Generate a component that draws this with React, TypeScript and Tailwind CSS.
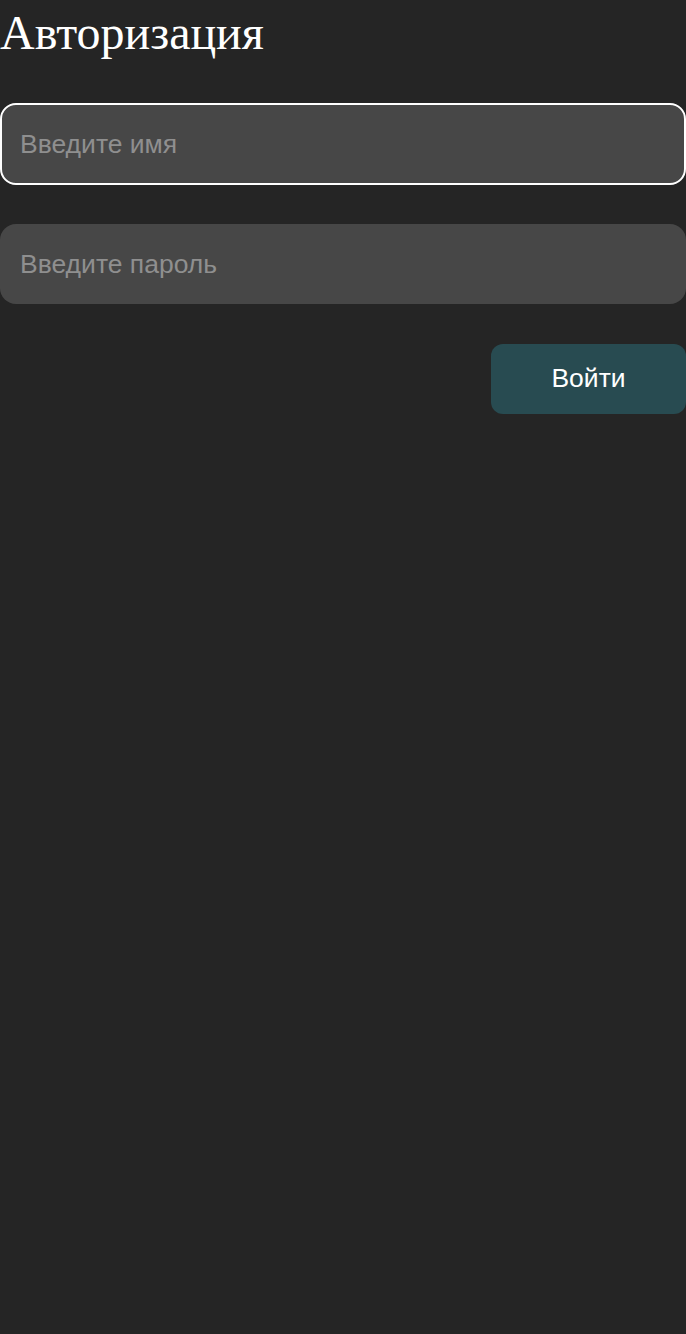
export default function App() {
    return (
        <div className="min-h-[1334px] w-full bg-[#252525]">
            <h1 className="font-['Liberation_Serif',serif] text-[48px] leading-[66px] text-white">
                Авторизация
            </h1>
            <form
                className="flex flex-col mt-[37px]"
                onSubmit={(e) => e.preventDefault()}
            >
                <input
                    className="h-[82px] w-full rounded-[16px] border-2 border-white bg-[#474747] px-[18px] font-['Liberation_Sans',sans-serif] text-[26.5px] text-white placeholder:text-[#8f8f8f] outline-none"
                    type="text"
                    placeholder="Введите имя"
                />
                <input
                    className="mt-[39px] h-[80px] w-full rounded-[16px] bg-[#474747] px-[20px] font-['Liberation_Sans',sans-serif] text-[26.5px] text-white placeholder:text-[#8f8f8f] outline-none"
                    type="password"
                    placeholder="Введите пароль"
                />
                <div className="flex justify-end mt-[40px]">
                    <button
                        className="h-[70px] w-[195px] rounded-[12px] bg-[#284b51] font-['Liberation_Sans',sans-serif] text-[26.5px] text-white"
                        type="submit"
                    >
                        Войти
                    </button>
                </div>
            </form>
        </div>
    );
}
